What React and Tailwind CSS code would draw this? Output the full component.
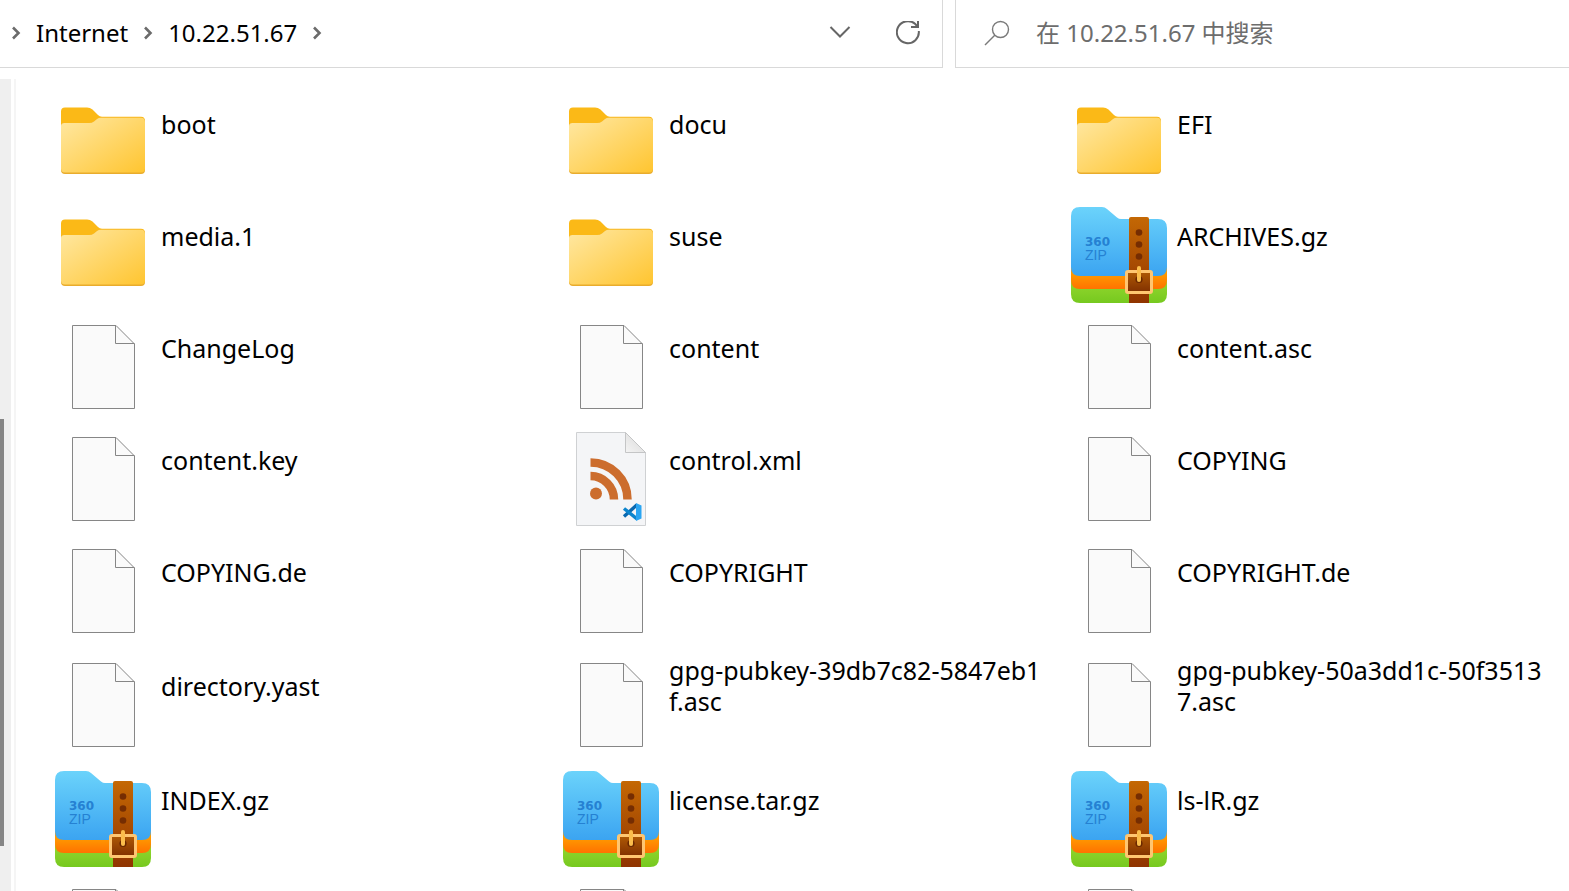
import React from "react";

const FILES = [
  ["boot", "folder"],
  ["docu", "folder"],
  ["EFI", "folder"],
  ["media.1", "folder"],
  ["suse", "folder"],
  ["ARCHIVES.gz", "zip"],
  ["ChangeLog", "file"],
  ["content", "file"],
  ["content.asc", "file"],
  ["content.key", "file"],
  ["control.xml", "xml"],
  ["COPYING", "file"],
  ["COPYING.de", "file"],
  ["COPYRIGHT", "file"],
  ["COPYRIGHT.de", "file"],
  ["directory.yast", "file"],
  ["gpg-pubkey-39db7c82-5847eb1f.asc", "file"],
  ["gpg-pubkey-50a3dd1c-50f35137.asc", "file"],
  ["INDEX.gz", "zip"],
  ["license.tar.gz", "zip"],
  ["ls-lR.gz", "zip"],
  ["", "file"],
  ["", "file"],
  ["", "file"],
];

function FolderIcon() {
  return (
    <svg viewBox="0 0 96 96" className="size-24" aria-hidden="true">
      <path d="M6 32V16.500Q6 12.500 10 12.500H32Q35 12.500 37.500 14.500L43 20Q44.500 21.700 47 21.700H86Q90 21.700 90 26V40H6Z" fill="#fbb917" />
      <path d="M6 31Q6 28 9.500 28H34Q37 28 39 26.500L42 24Q43.500 22.800 46 22.800H86Q90 22.800 90 27V75Q90 79 86 79H10Q6 79 6 75Z" fill="#e9ac2c" />
      <path d="M6 31Q6 28 9.500 28H34Q37 28 39 26.500L42 24Q43.500 22.800 46 22.800H86Q90 22.800 90 27V73.500Q90 77.500 86 77.500H10Q6 77.500 6 73.500Z" fill="url(#folderFront)" />
    </svg>
  );
}

function ZipIcon() {
  return (
    <svg viewBox="0 0 96 96" className="size-24" aria-hidden="true">
      <path d="M0 60H96V87Q96 96 87 96H9Q0 96 0 87Z" fill="url(#zipGreen)" />
      <path d="M0 55H96V73Q96 82 87 82H9Q0 82 0 73Z" fill="url(#zipOrange)" />
      <path d="M0 9Q0 0 9 0H31Q34 0 36 2L46 10.500Q48 12 50 12H87Q96 12 96 21V60Q96 69 87 69H9Q0 69 0 60Z" fill="url(#zipBlue)" />
      <text x="14" y="39" fontSize="12" fontWeight="700" fill="#2581d2" className="font-['DejaVu_Sans',sans-serif]">360</text>
      <text x="14" y="53" fontSize="14" fill="#2581d2" className="font-['Liberation_Sans',sans-serif]">ZIP</text>
      <path d="M58 12Q58 10 60 10H76Q78 10 78 12V96H58Z" fill="url(#zipStrap)" />
      <g fill="#752d02">
        <circle cx="68" cy="25.500" r="3.300" />
        <circle cx="68" cy="37.500" r="3.300" />
        <circle cx="68" cy="49.500" r="3.300" />
      </g>
      <rect x="55.500" y="64.500" width="25" height="21" rx="1.500" fill="url(#zipBuckle)" stroke="#ffc671" strokeWidth="3" />
      <circle cx="68" cy="72.500" r="3.600" fill="#6b2800" />
      <rect x="66" y="59" width="4" height="16" rx="2" fill="#fbbd4c" />
    </svg>
  );
}

function FileIcon() {
  return (
    <svg viewBox="0 0 96 96" className="size-24" aria-hidden="true">
      <path d="M17.500 6.500H61L79.500 25V89.500H17.500Z" fill="#fafafa" stroke="#868686" />
      <path d="M60.500 6.500V24.500H79.500" fill="none" stroke="#868686" />
    </svg>
  );
}

function XmlIcon() {
  return (
    <svg viewBox="0 0 96 96" className="size-24" aria-hidden="true">
      <path d="M13.500 1.500H62.500L82.500 21.500V94.500H13.500Z" fill="#f4f5f7" stroke="#cfd1d3" />
      <path d="M62.500 1.500V21.500H82.500Z" fill="url(#foldShade)" stroke="#c4c5c6" strokeLinejoin="round" />
      <circle cx="33" cy="62.500" r="6" fill="#cc6d2e" />
      <path d="M27.500 45A23.500 23.500 0 0 1 51 68.500M27.500 31.500A37 37 0 0 1 64.500 68.500" fill="none" stroke="#cc6d2e" strokeWidth="8.500" />
      <path d="M61 85.500L74 73.800" fill="none" stroke="#0868b0" strokeWidth="3.400" />
      <path d="M61 77.500L74 87.800" fill="none" stroke="#0b84cd" strokeWidth="3.400" />
      <path d="M73 72L78.500 74.500V87.500L73 90Z" fill="#2aa5f2" />
    </svg>
  );
}

const ICONS = { folder: FolderIcon, zip: ZipIcon, file: FileIcon, xml: XmlIcon };

function Gradients() {
  return (
    <svg width="0" height="0" className="absolute" aria-hidden="true">
      <defs>
        <linearGradient id="folderFront" x1="0" y1="0" x2="1" y2="1">
          <stop offset="0" stopColor="#ffe8a3" />
          <stop offset="1" stopColor="#ffc530" />
        </linearGradient>
        <linearGradient id="foldShade" x1="0" y1="1" x2="1" y2="0">
          <stop offset="0" stopColor="#f4f4f4" />
          <stop offset="1" stopColor="#d6d6d6" />
        </linearGradient>
        <linearGradient id="zipBlue" x1="0" y1="0" x2="0" y2="1">
          <stop offset="0" stopColor="#6bd3fb" />
          <stop offset="1" stopColor="#3ba4f1" />
        </linearGradient>
        <linearGradient id="zipOrange" x1="0" y1="0" x2="0" y2="1">
          <stop offset="0.400" stopColor="#ff9c00" />
          <stop offset="1" stopColor="#ff7200" />
        </linearGradient>
        <linearGradient id="zipGreen" x1="0" y1="0" x2="0" y2="1">
          <stop offset="0.500" stopColor="#8ed42c" />
          <stop offset="1" stopColor="#76c91f" />
        </linearGradient>
        <linearGradient id="zipStrap" x1="0" y1="0" x2="0" y2="1">
          <stop offset="0" stopColor="#c46804" />
          <stop offset="1" stopColor="#903400" />
        </linearGradient>
        <linearGradient id="zipBuckle" x1="0" y1="0" x2="0" y2="1">
          <stop offset="0" stopColor="#b05a05" />
          <stop offset="1" stopColor="#803000" />
        </linearGradient>
      </defs>
    </svg>
  );
}

function Crumb() {
  return (
    <svg viewBox="0 0 12 16" className="h-4 w-3 shrink-0" fill="none" stroke="#6b6b6b" strokeWidth="2.600" aria-hidden="true">
      <path d="M3 2.500L8.500 8L3 13.500" />
    </svg>
  );
}

export default function App() {
  return (
    <div className="flex h-screen flex-col gap-[11px] overflow-hidden bg-white font-['Noto_Sans','Noto_Sans_CJK_SC',sans-serif] text-2xl text-black">
      <Gradients />
      <header className="grid h-[68px] shrink-0 grid-cols-[943fr_614fr] gap-3">
        <nav aria-label="Address" className="flex min-w-0 items-center border-r border-b border-[#d9d9d9] pr-[14px] pb-[2px] pl-[10px]">
          <Crumb />
          <a href="#internet" className="ml-[14px]">Internet</a>
          <span className="ml-[14px]"><Crumb /></span>
          <a href="#host" className="ml-[14px]">10.22.51.67</a>
          <span className="ml-[14px]"><Crumb /></span>
          <button type="button" aria-label="Previous locations" className="ml-auto p-2">
            <svg viewBox="0 0 24 24" className="size-6" fill="none" stroke="#666" strokeWidth="2">
              <path d="M2.500 6L12 15.500L21.500 6" />
            </svg>
          </button>
          <button type="button" aria-label="Refresh" className="ml-7 p-2">
            <svg viewBox="0 0 24 24" className="size-6" fill="none" stroke="#666" strokeWidth="2">
              <path d="M22.800 10A11 11 0 1 1 19 2.800L22 6" />
              <path d="M22 -1V6H15" />
            </svg>
          </button>
        </nav>
        <label className="flex min-w-0 items-center gap-[26px] border-b border-l border-[#d9d9d9] pb-[2px] pl-7">
          <svg viewBox="0 0 26 26" className="size-[26px] shrink-0" fill="none" stroke="#7a7a7a" strokeWidth="1.400" aria-hidden="true">
            <circle cx="16.500" cy="9.500" r="8" />
            <path d="M11 15L1 25" />
          </svg>
          <input type="search" aria-label="Search" placeholder="在 10.22.51.67 中搜索" className="min-w-0 flex-1 outline-none placeholder:text-[#6d6d6d]" />
        </label>
      </header>
      <div className="flex min-h-0 flex-1">
        <div className="w-[11px] shrink-0 bg-[#efefef] pt-[340px]">
          <div className="h-[427px] w-1 bg-[#858585]" />
        </div>
        <main className="ml-[3px] min-w-0 flex-1 overflow-hidden border-l-2 border-[#f5f5f5] pt-2 pl-[39px]">
          <ul className="grid grid-cols-[repeat(auto-fill,480px)] gap-x-7">
            {FILES.map(([name, kind], i) => {
              const Icon = ICONS[kind];
              return (
                <li key={i} className="flex min-h-28 items-center gap-[10px] py-2">
                  <span className="shrink-0"><Icon /></span>
                  <span className="min-w-0 flex-1 pb-[38px] text-[25px] leading-[31px] break-all">{name}</span>
                </li>
              );
            })}
          </ul>
        </main>
      </div>
    </div>
  );
}
